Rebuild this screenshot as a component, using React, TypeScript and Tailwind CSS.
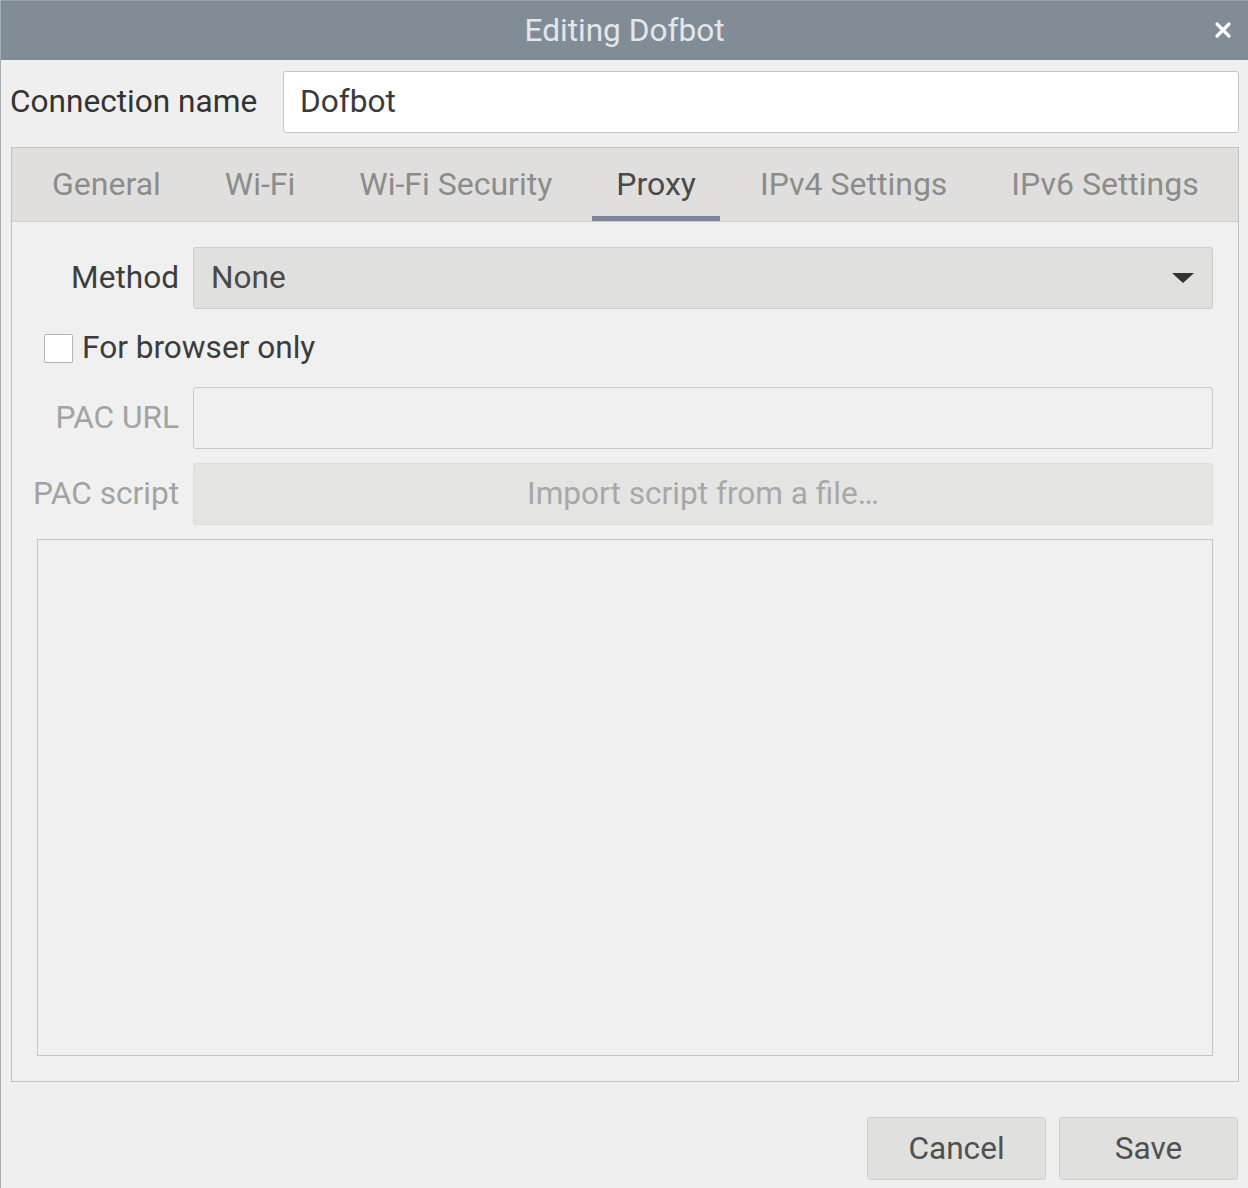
import { useState } from "react";

const tabs = ["General", "Wi-Fi", "Wi-Fi Security", "Proxy", "IPv4 Settings", "IPv6 Settings"];

function FieldRow({ label, dim, children }: { label: string; dim?: boolean; children: React.ReactNode }) {
  return (
    <div className="flex items-center gap-[14px]">
      <div className={`w-[142px] shrink-0 flex justify-end whitespace-nowrap ${dim ? "text-[#a3a3a3]" : "text-[#3d3d3d]"}`}>
        {label}
      </div>
      <div className="flex-1">{children}</div>
    </div>
  );
}

export default function App() {
  const [active, setActive] = useState("Proxy");
  const [browserOnly, setBrowserOnly] = useState(false);

  return (
    <div className="w-[1248px] h-[1188px] flex flex-col bg-[#efefef] border-l border-[#a8adb2] font-['Roboto',sans-serif] text-[31.6px] leading-none overflow-hidden">
      {/* title bar */}
      <div className="h-[60px] shrink-0 bg-[#828c97] border-t border-[#9aa4ae] flex items-center justify-center relative">
        <span className="text-[#e4e7ea]">Editing Dofbot</span>
        <button className="absolute right-[12px] top-[16px] w-[26px] h-[26px] flex items-center justify-center">
          <svg width="18" height="18" viewBox="0 0 18 18">
            <path d="M3 3 L15 15 M15 3 L3 15" stroke="#ffffff" strokeWidth="3.2" strokeLinecap="round" />
          </svg>
        </button>
      </div>

      <div className="flex-1 flex flex-col pl-[9px] pr-[9px]">
        {/* connection name */}
        <div className="mt-[11px] flex items-center">
          <span className="w-[273px] shrink-0 text-[#333333] whitespace-nowrap">Connection name</span>
          <div className="flex-1 h-[62px] bg-white border border-[#c6c6c6] rounded-[3px] flex items-center px-[16px] text-[#3a3a3a]">
            Dofbot
          </div>
        </div>

        {/* notebook */}
        <div className="mt-[14px] ml-[1px] h-[935px] border border-[#c2c2c2] flex flex-col">
          <div className="h-[74px] shrink-0 bg-[#e0dfdd] border-b border-[#cfcfcf] flex items-stretch gap-[16px] pl-[16px] text-[32px]">
            {tabs.map((t) => (
              <button
                key={t}
                onClick={() => setActive(t)}
                className={`px-[24px] flex items-center border-b-[5px] pt-[4px] whitespace-nowrap ${
                  active === t ? "border-[#7b8794] text-[#4a4a4a]" : "border-transparent text-[#8c8c8c]"
                }`}
              >
                {t}
              </button>
            ))}
          </div>

          <div className="flex-1 bg-[#f0f0f0] flex flex-col gap-[14px] p-[25px]">
            <FieldRow label="Method">
              <div className="h-[62px] bg-[#e0e0df] border border-[#cdcdcd] rounded-[3px] flex items-center justify-between pl-[17px] pr-[17px] text-[#4a4a4a]">
                <span>None</span>
                <svg width="24" height="12" viewBox="0 0 24 12">
                  <path d="M1 1 L23 1 L12 11 Z" fill="#333333" />
                </svg>
              </div>
            </FieldRow>

            <div className="h-[50px] flex items-center gap-[9px] pl-[7px]">
              <button
                onClick={() => setBrowserOnly(!browserOnly)}
                className="w-[29px] h-[29px] bg-white border border-[#b3b3b3] rounded-[2px]"
              />
              <span className="text-[#3c3c3c]">For browser only</span>
            </div>

            <FieldRow label="PAC URL" dim>
              <div className="h-[62px] bg-[#f0f0f0] border border-[#c8c8c8] rounded-[3px]" />
            </FieldRow>

            <FieldRow label="PAC script" dim>
              <div className="h-[62px] bg-[#e4e4e3] border border-[#dcdcdc] rounded-[3px] flex items-center justify-center text-[#a8a8a8]">
                Import script from a file…
              </div>
            </FieldRow>

            <div className="flex-1 border border-[#c4c4c4] bg-[#f0f0f0]" />
          </div>
        </div>

        {/* buttons */}
        <div className="mt-[35px] flex justify-end gap-[13px] pr-[1px]">
          <button className="w-[179px] h-[63px] bg-[#e0e0df] border border-[#cfcfcf] rounded-[3px] text-[#505050]">Cancel</button>
          <button className="w-[179px] h-[63px] bg-[#e0e0df] border border-[#cfcfcf] rounded-[3px] text-[#505050]">Save</button>
        </div>
      </div>
    </div>
  );
}
